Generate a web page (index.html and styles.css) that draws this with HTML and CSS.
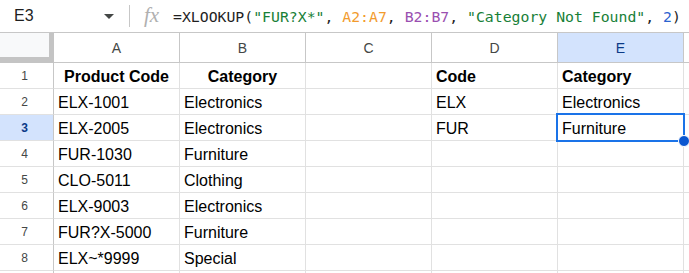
FILE: index.html
```html
<!DOCTYPE html>
<html lang="en">
<head>
    <meta charset="UTF-8">
    <title>Sheet</title>
    <link rel="stylesheet" href="styles.css">
</head>
<body>
    <div class="formula-bar">
        <div class="name-box">E3</div>
        <div class="name-arrow"></div>
        <div class="bar-sep"></div>
        <div class="fx">fx</div>
        <div class="formula">=XLOOKUP(<span class="str">"FUR?X*"</span>, <span class="ref-a">A2:A7</span>, <span class="ref-b">B2:B7</span>, <span class="str">"Category Not Found"</span>, <span class="num">2</span>)</div>
    </div>

    <div class="grid">
        <!-- column headers -->
        <div class="corner"></div>
        <div class="col-head">A</div>
        <div class="col-head">B</div>
        <div class="col-head">C</div>
        <div class="col-head">D</div>
        <div class="col-head active">E</div>
        <div class="col-head rest"></div>

        <div class="row-head">1</div>
        <div class="cell bold center">Product Code</div>
        <div class="cell bold center">Category</div>
        <div class="cell"></div>
        <div class="cell bold">Code</div>
        <div class="cell bold">Category</div>
        <div class="cell rest"></div>

        <div class="row-head">2</div>
        <div class="cell">ELX-1001</div>
        <div class="cell">Electronics</div>
        <div class="cell"></div>
        <div class="cell">ELX</div>
        <div class="cell">Electronics</div>
        <div class="cell rest"></div>

        <div class="row-head active">3</div>
        <div class="cell">ELX-2005</div>
        <div class="cell">Electronics</div>
        <div class="cell"></div>
        <div class="cell">FUR</div>
        <div class="cell selected">Furniture<span class="handle"></span></div>
        <div class="cell rest"></div>

        <div class="row-head">4</div>
        <div class="cell">FUR-1030</div>
        <div class="cell">Furniture</div>
        <div class="cell"></div>
        <div class="cell"></div>
        <div class="cell"></div>
        <div class="cell rest"></div>

        <div class="row-head">5</div>
        <div class="cell">CLO-5011</div>
        <div class="cell">Clothing</div>
        <div class="cell"></div>
        <div class="cell"></div>
        <div class="cell"></div>
        <div class="cell rest"></div>

        <div class="row-head">6</div>
        <div class="cell">ELX-9003</div>
        <div class="cell">Electronics</div>
        <div class="cell"></div>
        <div class="cell"></div>
        <div class="cell"></div>
        <div class="cell rest"></div>

        <div class="row-head">7</div>
        <div class="cell">FUR?X-5000</div>
        <div class="cell">Furniture</div>
        <div class="cell"></div>
        <div class="cell"></div>
        <div class="cell"></div>
        <div class="cell rest"></div>

        <div class="row-head">8</div>
        <div class="cell">ELX~*9999</div>
        <div class="cell">Special</div>
        <div class="cell"></div>
        <div class="cell"></div>
        <div class="cell"></div>
        <div class="cell rest"></div>

        <!-- top of row 9, cut off by the window -->
        <div class="row-head stub"></div>
        <div class="cell stub"></div>
        <div class="cell stub"></div>
        <div class="cell stub"></div>
        <div class="cell stub"></div>
        <div class="cell stub"></div>
        <div class="cell stub rest"></div>
    </div>
</body>
</html>
```

FILE: styles.css
```css
body {
    margin: 0;
    padding: 0;
    background-color: #ffffff;
    font-family: "Liberation Sans", Arial, sans-serif;
    color: #000000;
    overflow: hidden;
}

/* Formula bar */
.formula-bar {
    display: flex;
    align-items: center;
    height: 32px;
    border-bottom: 1px solid #c7c7c7;
}

.name-box {
    width: 90px;
    padding-left: 14px;
    font-size: 16px;
    color: #1f1f1f;
}

.name-arrow {
    width: 0;
    height: 0;
    border-left: 5px solid transparent;
    border-right: 5px solid transparent;
    border-top: 5px solid #444746;
    margin-top: 1px;
}

.bar-sep {
    width: 1px;
    height: 22px;
    margin-left: 15px;
    background-color: #c7c7c7;
}

.fx {
    width: 29px;
    margin-left: 14px;
    font-family: "Liberation Serif", serif;
    font-style: italic;
    font-size: 21px;
    color: #b0b0b0;
    line-height: 1;
    margin-top: -2px;
}

.formula {
    font-family: "DejaVu Sans Mono", monospace;
    font-size: 14.8px;
    color: #1f1f1f;
    white-space: nowrap;
}

.str { color: #188038; }
.ref-a { color: #f29b2e; }
.ref-b { color: #9a4fb0; }
.num { color: #2b63d0; }

/* Grid */
.grid {
    display: grid;
    grid-template-columns: 54px repeat(5, 126px) 1fr;
    grid-template-rows: 30px repeat(8, 26px) 3px;
}

.grid > div {
    box-sizing: border-box;
}

.corner {
    background-color: #f8f9fa;
    border-right: 5px solid #c4c4c4;
    border-bottom: 6px solid #c4c4c4;
}

.col-head {
    display: flex;
    align-items: center;
    justify-content: center;
    font-size: 14px;
    color: #444746;
    border-right: 1px solid #c7c7c7;
    border-bottom: 1px solid #c7c7c7;
}

.col-head.active {
    background-color: #d3e3fd;
    color: #0b3a87;
}

.row-head {
    display: flex;
    align-items: center;
    justify-content: center;
    padding-right: 4px;
    font-size: 12px;
    color: #444746;
    border-right: 1px solid #c7c7c7;
    border-bottom: 1px solid #e1e1e1;
}

.row-head.active {
    background-color: #d3e3fd;
    color: #0b3a87;
    font-weight: bold;
}

.cell {
    display: flex;
    align-items: center;
    padding: 2px 4px 0;
    font-size: 16px;
    white-space: nowrap;
    border-right: 1px solid #e1e1e1;
    border-bottom: 1px solid #e1e1e1;
}

.stub {
    padding: 0;
    border-bottom: none;
}

.rest {
    border-right: none;
}

.col-head.rest {
    border-right: none;
}

.bold {
    font-weight: bold;
}

.center {
    justify-content: center;
}

.selected {
    position: relative;
}

.selected::before {
    content: "";
    position: absolute;
    left: -2px;
    top: -2px;
    right: -2px;
    bottom: -2px;
    border: 2px solid #1a73e8;
}

.handle {
    position: absolute;
    right: -7px;
    bottom: -7px;
    width: 10px;
    height: 10px;
    border-radius: 50%;
    background-color: #0b57d0;
    border: 1px solid #ffffff;
    z-index: 2;
}
```
